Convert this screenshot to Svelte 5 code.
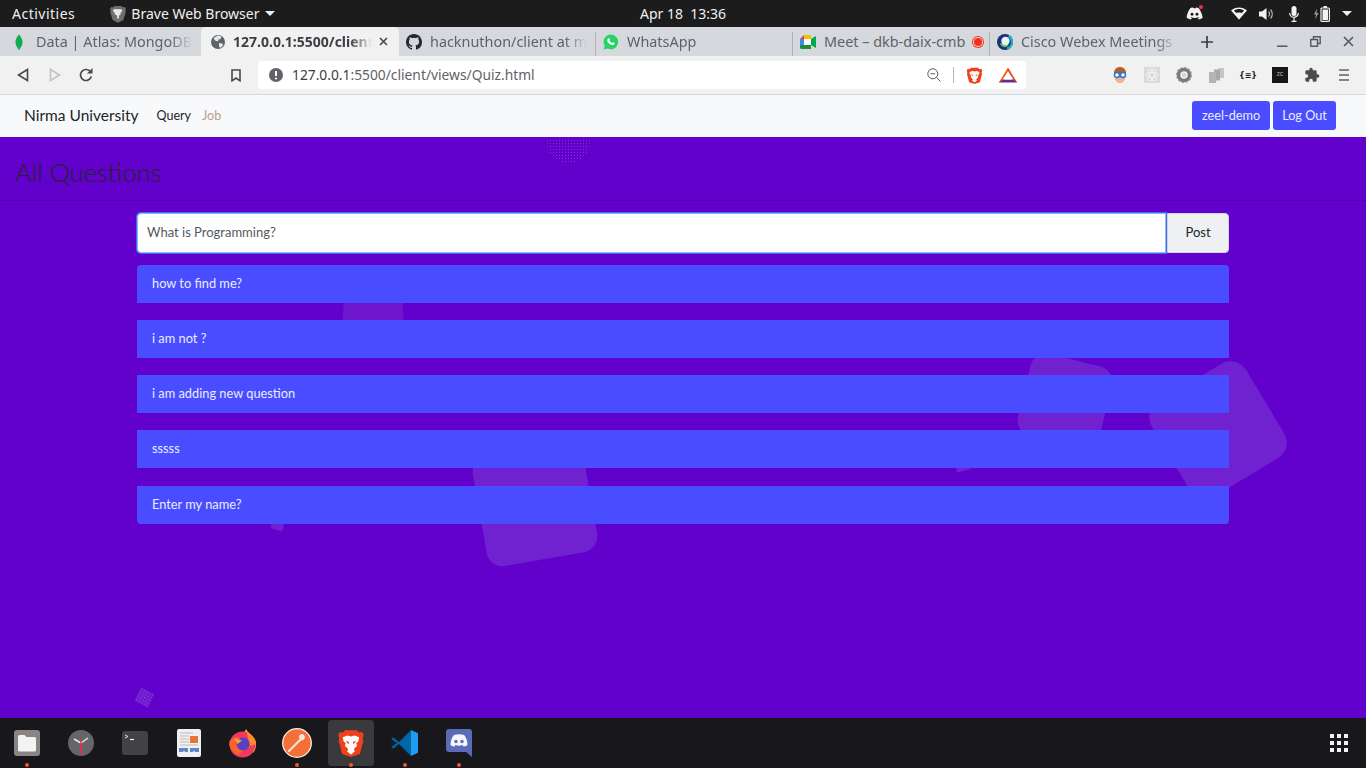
<script>
  // Browser tabs, in strip order (titles are cut where the strip fades them)
  const tabs = [
    { id: 'mongo', title: 'Data | Atlas: MongoDB A' },
    { id: 'local', title: '127.0.0.1:5500/client', active: true },
    { id: 'github', title: 'hacknuthon/client at m' },
    { id: 'whatsapp', title: 'WhatsApp' },
    { id: 'meet', title: 'Meet – dkb-daix-cmb', recording: true },
    { id: 'webex', title: 'Cisco Webex Meetings -' }
  ];

  const questions = [
    'how to find me?',
    'i am not ?',
    'i am adding new question',
    'sssss',
    'Enter my name?'
  ];

  let draft = $state('');
</script>

{#snippet brave(size)}
  <svg width={size} height={size} viewBox="0 0 24 24">
    <path fill="#f0411d" d="M7 1h10l2 2 2.500-.5L23 5l-1 3 .6 2-3 11.500L12 24l-7.600-2.500-3-11.500.6-2-1-3 1.500-2.500L5 3z" />
    <path fill="#fff" d="M12 6.500l3-1 4 1.500-.6 3.500-1.900 1.800.8 2-2.300 2.200-.5 1.500 1 1-3.500 2.800L8.500 19l1-1-.5-1.500-2.300-2.200.8-2-1.900-1.800L5 7l4-1.500z" />
    <path fill="#f0411d" d="M7.500 10l3 1.200-.7 1.800zM16.500 10l-3 1.200.7 1.800z" />
  </svg>
{/snippet}

{#snippet favicon(id)}
  {#if id === 'mongo'}
    <svg width="16" height="16" viewBox="0 0 16 16"><path fill="#13aa52" d="M8 0c.6 2 3.500 4 3.500 8S9 14 8.300 16h-.6C7 14 4.500 12 4.500 8S7.400 2 8 0z" /></svg>
  {:else if id === 'local'}
    <svg width="16" height="16" viewBox="0 0 16 16"><circle cx="8" cy="8" r="7" fill="#5f6368" /><path fill="#e8eaed" d="M8 1.500l3.500 1-1 2.500-2 .5-.5 2-3-1-1.500-2.500zM9 9l3.500.5.500 2-3 2.500-1-2z" /></svg>
  {:else if id === 'github'}
    <svg width="16" height="16" viewBox="0 0 16 16"><path fill="#24292e" d="M8 0C3.580 0 0 3.580 0 8c0 3.540 2.290 6.530 5.470 7.590.4.070.55-.17.55-.38v-1.340c-2.230.48-2.700-1.080-2.700-1.080-.36-.92-.89-1.170-.89-1.170-.73-.5.050-.49.050-.49.8.060 1.230.82 1.230.82.710 1.220 1.870.87 2.330.66.070-.52.280-.87.510-1.070-1.780-.2-3.640-.89-3.640-3.950 0-.87.310-1.590.820-2.150-.080-.2-.360-1.020.080-2.120 0 0 .670-.210 2.200.82a7.600 7.600 0 0 1 4 0c1.530-1.040 2.200-.82 2.200-.82.440 1.100.160 1.920.080 2.120.510.560.820 1.270.820 2.150 0 3.070-1.870 3.750-3.650 3.950.290.250.540.730.540 1.480v2.200c0 .210.150.460.550.380A8 8 0 0 0 16 8c0-4.420-3.580-8-8-8z" /></svg>
  {:else if id === 'whatsapp'}
    <svg width="16" height="16" viewBox="0 0 16 16"><path fill="#25d366" d="M8 .500a7.400 7.400 0 0 0-6.300 11.300L.6 15.500l3.800-1A7.400 7.400 0 1 0 8 .500z" /><path fill="#fff" d="M5.600 4.200c.5-.2.800 0 1 .5l.5 1.200-.6.900c.5 1 1.300 1.800 2.500 2.300l.9-.8 1.500.7c.3.200.2 1.300-.6 1.800-1 .6-2.600.2-4.300-1.100C5 9.300 4 7.500 4.300 5.800c.1-.7.800-1.400 1.300-1.600z" /></svg>
  {:else if id === 'meet'}
    <svg width="16" height="16" viewBox="0 0 16 16"><path fill="#fbbc04" d="M4 1h7v4H4z" /><path fill="#4285f4" d="M0 5h4v6H0z" /><path fill="#ea4335" d="M0 5l4-4v4z" /><path fill="#1e8e3e" d="M0 11h4v4H1.500A1.500 1.500 0 0 1 0 13.500zM4 11h7v4H4z" /><path fill="#00ac47" d="M11 5v6l5 3V2z" /><path fill="#fff" d="M4 5h7v6H4z" /></svg>
  {:else}
    <svg width="16" height="16" viewBox="0 0 16 16"><circle cx="8" cy="8" r="8" fill="#1c2f7c" /><circle cx="8" cy="8" r="7" fill="none" stroke="#12b5cb" stroke-width="2.200" stroke-dasharray="16 40" transform="rotate(-60 8 8)" /><path fill="#6cc04a" d="M3 9a5 5 0 0 0 9 2z" /><circle cx="8.500" cy="7" r="4.200" fill="#e8f6fb" /></svg>
  {/if}
{/snippet}

<div class="screen">
  <!-- Desktop top bar -->
  <header class="topbar">
    <span class="activities">Activities</span>
    <span class="appname">
      <svg width="16" height="18" viewBox="0 0 24 26"><path fill="#6e6e6e" d="M7 1h10l2 2 3-.5L24 6l-1 3 .5 2-3.500 11L12 26l-8-4L.5 11 1 9 0 6l2-3.500L5 3z" /><path fill="#e6e6e6" d="M12 6l3.500-.5 3 1.500-1 3-2 1.500.8 2-2.300 1.500-1 2.500 1 1-2 1.500-2-1.500 1-1-1-2.500L6.700 13.500l.8-2-2-1.500-1-3 3-1.500z" /></svg>
      Brave Web Browser
      <i class="caret"></i>
    </span>
    <span class="clock">Apr 18&nbsp; 13:36</span>
    <div class="tray">
      <span class="discord-tray">
        <svg width="17" height="13" viewBox="0 0 24 18"><path fill="#f2f2f2" d="M6 1.500C8 .7 9.500.5 10 .5l.5 1.200h3L14 .5c.5 0 2 .2 4 1 3 4 5 9 5.500 13.500-2 1.500-4 2.300-5.500 2.500l-1.300-2.200 2-1-.5-.4c-4 1.800-7.400 1.800-11.400 0l-.5.4 2 1L7 17.500C5.500 17.300 3.500 16.500 1 15 1 10.500 3 5.500 6 1.500z" /><circle cx="8.500" cy="10" r="2" fill="#1c1c1c" /><circle cx="15.500" cy="10" r="2" fill="#1c1c1c" /></svg>
        <i class="tray-dot"></i>
      </span>
      <svg class="wifi" width="16" height="13" viewBox="0 0 16 13"><path fill="#f2f2f2" d="M8 12.500L0 3.500C4.500-.5 11.500-.5 16 3.500zM8 9.500l5-6c-3-2-7-2-10 0z" fill-rule="evenodd" /><path fill="#f2f2f2" d="M8 12.500L3.500 6.500c2.700-1.500 6.300-1.500 9 0z" /></svg>
      <svg class="vol" width="15" height="14" viewBox="0 0 15 14"><path fill="#f2f2f2" d="M0 4.500h3L7.500 1v12L3 9.500H0z" /><path fill="none" stroke="#b5b5b5" stroke-width="1.200" d="M9.500 4.500a3.500 3.500 0 0 1 0 5M11.500 2.500a6.500 6.500 0 0 1 0 9" /></svg>
      <svg class="mic" width="10" height="16" viewBox="0 0 10 16"><rect x="2.500" y="0" width="5" height="10" rx="2.500" fill="#f2f2f2" /><path fill="none" stroke="#f2f2f2" stroke-width="1.200" d="M.7 7a4.300 4.300 0 0 0 8.600 0M5 11.500V15M2.500 15.300h5" /></svg>
      <svg class="batt" width="16" height="16" viewBox="0 0 16 16"><path fill="#9a9a9a" d="M3 2.500L0 8.500h2l-1 5 3.500-6.500h-2z" /><rect x="7" y="2" width="8.400" height="13.400" rx="1" fill="none" stroke="#f2f2f2" stroke-width="1.200" /><rect x="9.500" y="0" width="3.500" height="2" fill="#f2f2f2" /><rect x="8.500" y="3.500" width="5.500" height="10.500" fill="#f2f2f2" /></svg>
      <i class="caret"></i>
    </div>
  </header>

  <!-- Browser tab strip -->
  <div class="tabstrip">
    {#each tabs as tab, i}
      <div class="tab" class:active={tab.active} class:sep={i > 2}>
        <span class="fav">{@render favicon(tab.id)}</span>
        <span class="tab-title" class:full={tab.recording}>{tab.title}</span>
        {#if tab.recording}<i class="rec"></i>{/if}
        {#if tab.active}
          <svg class="tab-close" width="9" height="9" viewBox="0 0 9 9"><path stroke="#45474a" stroke-width="1.600" d="M1 1l7 7M8 1L1 8" /></svg>
        {/if}
      </div>
    {/each}
    <div class="new-tab">
      <svg width="12" height="12" viewBox="0 0 12 12"><path stroke="#3c3f43" stroke-width="1.700" d="M6 0v12M0 6h12" /></svg>
    </div>
    <div class="winctl">
      <svg width="11" height="11" viewBox="0 0 11 11"><path stroke="#55585c" stroke-width="1.500" d="M0 10.200h10.500" /></svg>
      <svg width="11" height="11" viewBox="0 0 11 11"><path fill="none" stroke="#55585c" stroke-width="1.400" d="M3.500 3V.8h6.700v6.700H8M.8 3.500h6.700v6.700H.8z" /></svg>
      <svg width="11" height="11" viewBox="0 0 11 11"><path stroke="#55585c" stroke-width="1.600" d="M1 1l9 9M10 1l-9 9" /></svg>
    </div>
  </div>

  <!-- Browser toolbar -->
  <div class="toolbar">
    <div class="nav-btns">
      <svg width="12" height="14" viewBox="0 0 12 14"><path fill="none" stroke="#45474a" stroke-width="1.600" d="M10.500 1.500v11L1.500 7z" /></svg>
      <svg width="12" height="14" viewBox="0 0 12 14"><path fill="none" stroke="#bfc2c6" stroke-width="1.600" d="M1.500 1.500v11l9-5.500z" /></svg>
      <svg width="14" height="14" viewBox="0 0 14 14"><path fill="none" stroke="#45474a" stroke-width="1.700" d="M12.300 8.500A5.500 5.500 0 1 1 11 3.200" /><path fill="#45474a" d="M13.500 0v5.500H8z" /></svg>
    </div>
    <svg class="bookmark" width="10" height="13" viewBox="0 0 10 13"><path fill="none" stroke="#45474a" stroke-width="1.600" d="M1 1h8v10.800L5 9l-4 2.800z" /></svg>
    <div class="omnibox">
      <svg width="14" height="14" viewBox="0 0 14 14"><circle cx="7" cy="7" r="7" fill="#5f6368" /><path stroke="#fff" stroke-width="2" d="M7 3v5" /><circle cx="7" cy="10.500" r="1.100" fill="#fff" /></svg>
      <span class="url"><b>127.0.0.1</b>:5500/client/views/Quiz.html</span>
      <svg class="zoom-out" width="14" height="14" viewBox="0 0 14 14"><circle cx="5.800" cy="5.800" r="5" fill="none" stroke="#55585c" /><path stroke="#55585c" d="M3.500 5.800h4.600M9.500 9.500l4 4" /></svg>
      <i class="omni-sep"></i>
      {@render brave(17)}
      <svg class="bat" width="18" height="16" viewBox="0 0 18 16"><path fill="#662d91" d="M0 15.500h18l-2-3H2z" /><path fill="#ff5000" d="M9 .5l-9 15 3-2L9 4z" /><path fill="#e6411f" d="M9 .5l9 15-3-2L9 4z" /><path fill="#fff" d="M9 5.500l3.800 7H5.200z" /></svg>
    </div>
    <div class="exts">
      <svg width="16" height="16" viewBox="0 0 16 16"><path fill="#b5622a" d="M2 6c0-4 3-6 6-6s6 2 6 6v2H2z" /><path fill="#f0b58c" d="M3 7h10v6l-3 3H6l-3-3z" /><circle cx="5" cy="8" r="2.500" fill="#fff" stroke="#2f6fd6" stroke-width="1.400" /><circle cx="11" cy="8" r="2.500" fill="#fff" stroke="#2f6fd6" stroke-width="1.400" /></svg>
      <svg width="16" height="16" viewBox="0 0 16 16"><rect width="16" height="16" fill="#d9dadb" /><g fill="none" stroke="#f3f3f3"><ellipse cx="8" cy="8" rx="6.500" ry="2.500" /><ellipse cx="8" cy="8" rx="6.500" ry="2.500" transform="rotate(60 8 8)" /><ellipse cx="8" cy="8" rx="6.500" ry="2.500" transform="rotate(120 8 8)" /></g></svg>
      <svg width="16" height="16" viewBox="0 0 16 16"><circle cx="8" cy="8" r="5.500" fill="none" stroke="#77797b" stroke-width="3.500" /><circle cx="8" cy="8" r="7.200" fill="none" stroke="#8e9092" stroke-width="1.600" stroke-dasharray="2 1.770" /><circle cx="8" cy="8" r="2.200" fill="#d5d6d7" /></svg>
      <svg width="15" height="15" viewBox="0 0 15 15"><path fill="#c4c5c6" d="M9 0h6v10H9z" /><path fill="#a8a9aa" d="M5 1.500h6v11H5z" /><path fill="#b3b4b5" d="M0 4h7v11H0z" /></svg>
      <span class="json-ext">{'{≡}'}</span>
      <svg width="16" height="16" viewBox="0 0 16 16"><rect width="16" height="16" fill="#17171a" /><text x="8" y="9" font-size="5" font-family="Liberation Sans" font-weight="700" text-anchor="middle" fill="#9a9a9a">ZC</text></svg>
      <svg width="16" height="16" viewBox="0 0 24 24"><path fill="#4a4c4f" d="M20.500 11H19V7c0-1.100-.9-2-2-2h-4V3.500C13 2.120 11.880 1 10.500 1S8 2.120 8 3.500V5H4c-1.100 0-1.990.9-1.990 2v3.800H3.500c1.490 0 2.700 1.210 2.700 2.700s-1.210 2.700-2.700 2.700H2V20c0 1.100.9 2 2 2h3.800v-1.500c0-1.490 1.210-2.700 2.700-2.700 1.490 0 2.700 1.210 2.700 2.700V22H17c1.100 0 2-.9 2-2v-4h1.500c1.380 0 2.500-1.120 2.500-2.500S21.880 11 20.500 11z" /></svg>
      <svg width="10" height="12" viewBox="0 0 10 12"><path stroke="#5f6164" stroke-width="1.600" d="M0 1h10M0 6h10M0 11h10" /></svg>
    </div>
  </div>

  <!-- Page navbar -->
  <nav class="navbar">
    <a class="brand" href="#top">Nirma University</a>
    <a class="nav-link" href="#query">Query</a>
    <a class="nav-link muted" href="#job">Job</a>
    <div class="nav-actions">
      <button class="btn-user">zeel-demo</button>
      <button class="btn-user">Log Out</button>
    </div>
  </nav>

  <main class="page">
    <!-- Decorative background particles -->
    <i class="shape dots half"></i>
    <i class="shape blob"></i>
    <i class="shape square-a"></i>
    <i class="shape square-b"></i>
    <i class="shape square-c"></i>
    <i class="shape speck-a"></i>
    <i class="shape speck-b"></i>
    <i class="shape diamond"></i>

    <h1 class="page-title">All Questions</h1>

    <div class="content">
      <form class="ask" onsubmit={(e) => e.preventDefault()}>
        <input type="text" bind:value={draft} placeholder="What is Programming?" />
        <button type="submit">Post</button>
      </form>
      <ul class="questions">
        {#each questions as q}
          <li>{q}</li>
        {/each}
      </ul>
    </div>
  </main>

  <!-- Desktop dock -->
  <footer class="dock">
    <div class="dock-item running">
      <svg width="26" height="26" viewBox="0 0 26 26"><rect width="26" height="26" rx="3" fill="#8a8583" /><path fill="#f3f3f4" d="M4 6.500a1.500 1.500 0 0 1 1.500-1.500h5l2 2h8A1.500 1.500 0 0 1 22 8.500V20a1.500 1.500 0 0 1-1.500 1.500h-15A1.500 1.500 0 0 1 4 20z" /></svg>
    </div>
    <div class="dock-item">
      <svg width="26" height="26" viewBox="0 0 26 26"><circle cx="13" cy="13" r="13" fill="#666668" /><path stroke="#e8e8e8" stroke-width="1.500" d="M13 13L6 9M13 13l7-5" /><path stroke="#ef2b4a" stroke-width="1.500" d="M13 10v14" /></svg>
    </div>
    <div class="dock-item">
      <svg width="26" height="24" viewBox="0 0 26 24"><rect width="26" height="24" rx="3" fill="#434346" /><path fill="none" stroke="#ddd" d="M3 4l3 1.500L3 7" /><path stroke="#eee" stroke-width="1.200" d="M8 8.500h4" /></svg>
    </div>
    <div class="dock-item">
      <svg width="24" height="28" viewBox="0 0 24 28"><rect width="24" height="28" rx="2" fill="#f0f0f0" /><path stroke="#b9b9b9" stroke-width="1.200" d="M3 4h13M3 7h9M3 10h9M3 13h9M3 16h18" /><rect x="13" y="7" width="8" height="7" fill="#e9743a" /><path fill="#5c86c9" d="M2 19h9v4H8l-1-1.500L6 23H2zM13 19h9v4h-4l-1-1.500-1 1.500h-3z" /></svg>
    </div>
    <div class="dock-item">
      <svg width="30" height="30" viewBox="0 0 30 30"><path fill="#ffbd2e" d="M18 1c1 4 10 7 10 15 0 4-1 7-3 9L14 9z" /><circle cx="14.500" cy="16.500" r="13" fill="#ee3a5c" /><path fill="#ff8a2a" d="M18 1c1 4 10 7 10 15L22 18z" /><path fill="#f8622c" d="M1.500 13c3-3 7-5 11-3l8 8-10 9C4 25 .5 19 1.500 13z" /><circle cx="15" cy="16" r="6.500" fill="#5a3fc0" /><path fill="#ffa030" d="M6 10l8 2.500-4.500 3.500z" /></svg>
    </div>
    <div class="dock-item running">
      <svg width="30" height="30" viewBox="0 0 30 30"><circle cx="15" cy="15" r="14.300" fill="#f56f38" stroke="#f6efe9" stroke-width="1.300" /><path stroke="#f7e3d7" stroke-width="2.200" stroke-linecap="round" d="M7 23l13-13" /><path fill="#f7e3d7" d="M17 10a3 3 0 0 1 5-3 3 3 0 0 1-1 5l-1 1z" /></svg>
    </div>
    <div class="dock-item running current">
      {@render brave(28)}
    </div>
    <div class="dock-item running">
      <svg width="28" height="28" viewBox="0 0 28 28"><path fill="#0065a9" d="M20 1L8 13 2.500 8.500 0 10l6 4-6 4 2.500 1.500L8 15l12 12z" /><path fill="#1f9cf0" d="M20 1l7 3.300v19.400L20 27z" /></svg>
    </div>
    <div class="dock-item running">
      <svg width="26" height="28" viewBox="0 0 26 28"><path fill="#5a6cb8" d="M3 0h20a3 3 0 0 1 3 3v25l-6-5H3a3 3 0 0 1-3-3V3a3 3 0 0 1 3-3z" /><path fill="#f5f6fb" d="M8 6c3-1 7-1 10 0 2 2 3.500 6 3.500 10-1.500 1-3 1.500-4 1.500l-1-1.500c-2.500 1-4.500 1-7 0l-1 1.500c-1 0-2.500-.5-4-1.500C4.500 12 6 8 8 6z" /><circle cx="10" cy="12.500" r="1.700" fill="#5a6cb8" /><circle cx="16" cy="12.500" r="1.700" fill="#5a6cb8" /></svg>
    </div>
    <div class="app-grid">
      {#each Array(9) as _}<i></i>{/each}
    </div>
  </footer>
</div>

<style>
  :global(body) {
    margin: 0;
    background: #6200cc;
  }

  .screen {
    width: 1366px;
    height: 768px;
    display: flex;
    flex-direction: column;
    overflow: hidden;
    font-family: 'Noto Sans', sans-serif;
  }

  /* Desktop top bar */
  .topbar {
    height: 27px;
    flex: none;
    background: #1c1c1c;
    color: #f0f0f0;
    font-size: 14px;
    display: flex;
    align-items: center;
    position: relative;
  }

  .activities {
    margin-left: 12px;
    letter-spacing: 0.5px;
  }

  .appname {
    margin-left: 35px;
    display: flex;
    align-items: center;
    gap: 5px;
  }

  .caret {
    width: 0;
    height: 0;
    border-left: 5px solid transparent;
    border-right: 5px solid transparent;
    border-top: 5px solid #f0f0f0;
  }

  .clock {
    position: absolute;
    left: 640px;
  }

  .tray {
    margin-left: auto;
    margin-right: 14px;
    display: flex;
    align-items: center;
    gap: 12px;
  }

  .discord-tray {
    position: relative;
    display: flex;
    margin-right: 16px;
  }

  .tray-dot {
    position: absolute;
    right: 0;
    top: -2px;
    width: 4px;
    height: 4px;
    border-radius: 50%;
    background: #f0304a;
  }

  .mic {
    margin: 0 3px;
  }

  /* Tab strip */
  .tabstrip {
    height: 29px;
    flex: none;
    background: #d5d8dc;
    display: flex;
    align-items: stretch;
    font-size: 14.400px;
    color: #5f6368;
  }

  .tab {
    width: 197px;
    box-sizing: border-box;
    display: flex;
    align-items: center;
    padding: 0 9px 0 7px;
    position: relative;
  }

  .tab:first-child {
    width: 201px;
    padding-left: 11px;
  }

  .tab:first-child .fav {
    margin-right: 9px;
  }

  .tab.sep::before {
    content: '';
    position: absolute;
    left: -1px;
    top: 5px;
    bottom: 0;
    width: 1px;
    background: #aeb1b5;
  }

  .tab.active {
    width: 198px;
    background: #f1f1f2;
    color: #3c3f43;
    font-weight: 700;
    font-size: 14px;
    border-radius: 5px 5px 0 0;
    padding: 0 11px 0 9px;
  }

  .tab.active .fav {
    margin-right: 7px;
  }

  .fav {
    display: flex;
    flex: none;
    margin-right: 8px;
  }

  .tab-title {
    flex: 1;
    min-width: 0;
    white-space: nowrap;
    overflow: hidden;
    -webkit-mask-image: linear-gradient(to right, #000 calc(100% - 22px), transparent);
    mask-image: linear-gradient(to right, #000 calc(100% - 22px), transparent);
  }

  .tab-title.full {
    overflow: visible;
    -webkit-mask-image: none;
    mask-image: none;
  }

  .tab-close {
    margin-left: 7px;
    flex: none;
  }

  .rec {
    width: 8px;
    height: 8px;
    flex: none;
    margin: 0 -1px 0 6px;
    border-radius: 50%;
    background: #f0301f;
    box-shadow: 0 0 0 1px #fbd5d0, 0 0 0 2px #e83525;
  }

  .new-tab {
    display: flex;
    align-items: center;
    margin-left: 14px;
  }

  .winctl {
    margin-left: auto;
    margin-right: 12px;
    display: flex;
    align-items: center;
    gap: 22px;
  }

  /* Toolbar */
  .toolbar {
    height: 39px;
    flex: none;
    box-sizing: border-box;
    background: #f1f1f2;
    border-bottom: 1px solid #d5d8dc;
    display: flex;
    align-items: center;
  }

  .nav-btns {
    display: flex;
    align-items: center;
    gap: 20px;
    margin-left: 17px;
    width: 209px;
  }

  .nav-btns svg:last-child {
    margin-left: -2px;
  }

  .bookmark {
    margin-left: 5px;
  }

  .omnibox {
    margin-left: 17px;
    width: 768px;
    height: 28px;
    box-sizing: border-box;
    background: #fff;
    border-radius: 4px;
    display: flex;
    align-items: center;
    padding: 0 9px 0 11px;
    font-size: 13.800px;
    color: #5f6368;
  }

  .url {
    margin-left: 9px;
    padding-bottom: 2px;
  }

  .url b {
    font-weight: 400;
    color: #3c3f43;
  }

  .zoom-out {
    margin-left: auto;
  }

  .omni-sep {
    width: 1px;
    height: 16px;
    background: #b5b7ba;
    margin: 0 12px;
  }

  .bat {
    margin-left: 16px;
  }

  /* Extension icons sit in equal slots */
  .exts {
    margin-left: 78px;
    display: grid;
    grid-template-columns: repeat(8, 32px);
    justify-items: center;
    align-items: center;
  }

  .json-ext {
    font: 700 8px 'DejaVu Sans', sans-serif;
    color: #222;
    white-space: nowrap;
  }

  /* Page navbar */
  .navbar {
    height: 42px;
    flex: none;
    box-sizing: border-box;
    background: #f8f9fa;
    display: flex;
    align-items: center;
    padding: 0 30px 1px 24px;
    font-family: Lato, sans-serif;
  }

  a {
    text-decoration: none;
  }

  .brand {
    font-size: 15.500px;
    color: #212529;
    margin-right: 18px;
    padding-bottom: 1px;
  }

  .nav-link {
    font-size: 12.500px;
    color: #212529;
    margin-right: 11px;
  }

  .nav-link.muted {
    color: #b8a08f;
  }

  .nav-actions {
    margin-left: auto;
    display: flex;
    gap: 3px;
  }

  .btn-user {
    height: 29px;
    padding: 0 0 2px;
    width: 78px;
    border: none;
    border-radius: 3px;
    background: #4a4dff;
    color: #e8eeff;
    font: 12.700px Lato, sans-serif;
  }

  .btn-user:last-child {
    width: 63px;
  }

  /* Page body */
  .page {
    flex: 1;
    min-height: 0;
    position: relative;
    background: #6200cc;
    font-family: Lato, sans-serif;
  }

  .page-title {
    position: relative;
    margin: 0;
    height: 64px;
    box-sizing: border-box;
    border-bottom: 1px solid #5400ad;
    padding: 19px 0 0 15px;
    font-size: 25.400px;
    line-height: 32px;
    font-weight: 300;
    color: #212529;
  }

  .content {
    position: relative;
    width: 1092px;
    margin: 12px 0 0 137px;
  }

  .ask {
    display: flex;
    height: 40px;
  }

  .ask input {
    flex: 1;
    min-width: 0;
    box-sizing: border-box;
    border: 1px solid #80bdff;
    outline: none;
    border-radius: 4px 0 0 4px;
    box-shadow: 0 0 0 1px #4d63f5;
    padding: 0 9px 2px;
    font: 13px Lato, sans-serif;
    color: #495057;
  }

  .ask input::placeholder {
    color: #55595e;
    opacity: 1;
  }

  .ask button {
    width: 62px;
    margin-left: 1px;
    padding: 0 0 2px;
    border: 1px solid #ced4da;
    border-radius: 0 4px 4px 0;
    background: #eef0f2;
    color: #212529;
    font: 13px Lato, sans-serif;
  }

  .questions {
    list-style: none;
    margin: 12px 0 0;
    padding: 0;
    display: flex;
    flex-direction: column;
    gap: 17px;
  }

  .questions li {
    height: 38px;
    box-sizing: border-box;
    padding: 0 15px 2px;
    display: flex;
    align-items: center;
    background: #4a4dff;
    color: #e8eeff;
    font-size: 12.800px;
  }

  .questions li:first-child {
    border-radius: 4px 4px 0 0;
  }

  .questions li:last-child {
    border-radius: 0 0 4px 4px;
    margin-top: 1px;
  }

  /* Background particles, placed on the page canvas */
  .shape {
    position: absolute;
    display: block;
    background: #7022d0;
  }

  .dots {
    background: radial-gradient(circle, #7f35d4 0.8px, transparent 1px) 0 0 / 3px 3px;
  }

  .half {
    left: 546px;
    top: -22px;
    width: 45px;
    height: 48px;
    border-radius: 50%;
    clip-path: inset(24px 0 0 0);
  }

  .blob {
    left: 342px;
    top: 158px;
    width: 62px;
    height: 30px;
    background: #6e16cd;
    clip-path: polygon(4% 0, 97% 0, 100% 100%, 0 100%);
  }

  .square-a {
    left: 1023px;
    top: 222px;
    width: 84px;
    height: 84px;
    border-radius: 16px;
    transform: rotate(14deg);
  }

  .square-b {
    left: 1163px;
    top: 238px;
    width: 110px;
    height: 110px;
    border-radius: 18px;
    transform: rotate(-31deg);
  }

  .square-c {
    left: 479px;
    top: 311px;
    width: 112px;
    height: 112px;
    border-radius: 16px;
    transform: rotate(-10deg);
  }

  .speck-a {
    left: 955px;
    top: 318px;
    width: 14px;
    height: 16px;
    transform: rotate(-15deg);
  }

  .speck-b {
    left: 272px;
    top: 380px;
    width: 12px;
    height: 13px;
    transform: rotate(15deg);
  }

  .diamond {
    left: 137px;
    top: 553px;
    width: 15px;
    height: 15px;
    background: radial-gradient(circle, #8a4fe0 0.6px, transparent 0.8px) 0 0 / 3px 3px, #6c1ccd;
    transform: rotate(28deg);
  }

  /* Dock */
  .dock {
    height: 50px;
    flex: none;
    background: #17171c;
    display: flex;
    align-items: center;
  }

  .dock-item {
    width: 54px;
    height: 46px;
    flex: none;
    display: flex;
    align-items: center;
    justify-content: center;
    position: relative;
  }

  .dock-item.current::before {
    content: '';
    position: absolute;
    top: 0;
    bottom: 0;
    left: 4px;
    right: 4px;
    border-radius: 4px;
    background: #3a3a3d;
  }

  .dock-item svg {
    position: relative;
  }

  .dock-item.running::after {
    content: '';
    position: absolute;
    left: 25px;
    bottom: -1px;
    width: 4px;
    height: 4px;
    border-radius: 50%;
    background: #f1592a;
  }

  .app-grid {
    margin-left: auto;
    margin-right: 18px;
    display: grid;
    grid-template-columns: repeat(3, 4px);
    gap: 3px;
  }

  .app-grid i {
    width: 4px;
    height: 4px;
    background: #f2f2f2;
  }
</style>
